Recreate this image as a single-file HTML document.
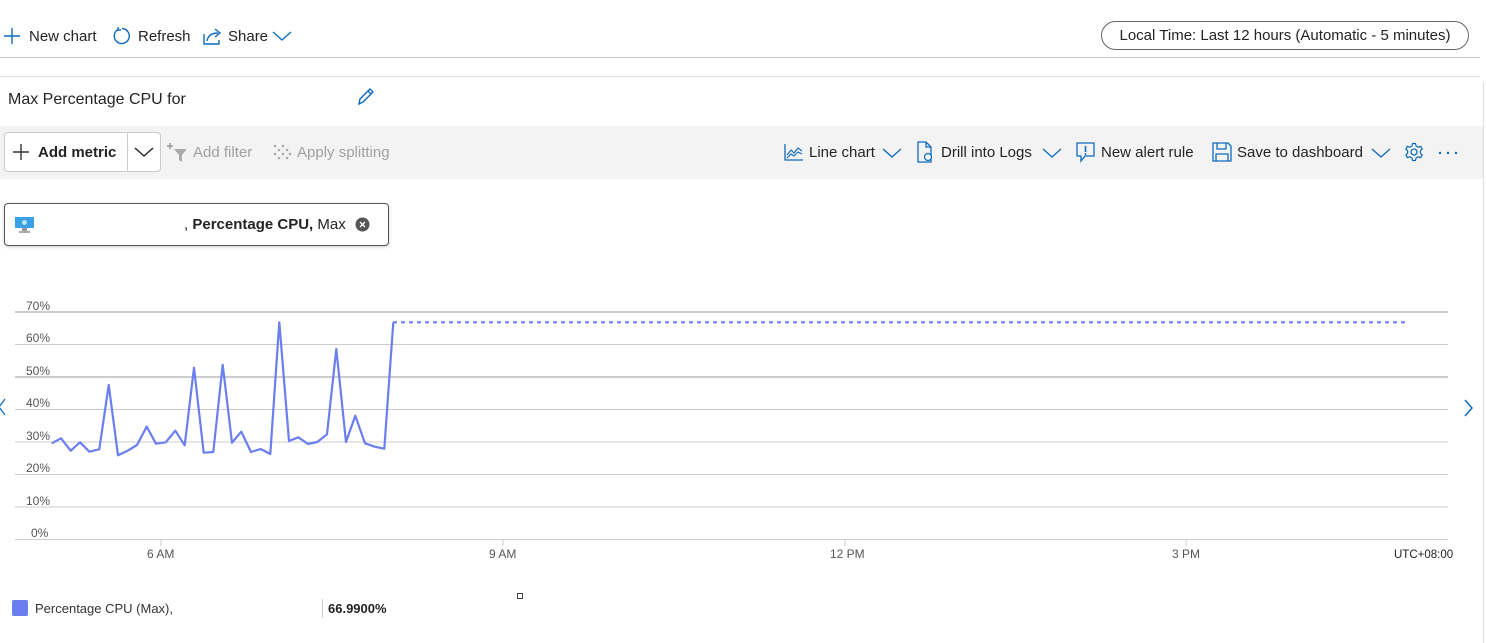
<!DOCTYPE html>
<html><head><meta charset="utf-8"><style>
*{margin:0;padding:0;box-sizing:border-box}
body{width:1486px;height:643px;background:#fff;font-family:"Liberation Sans",sans-serif;color:#242424;position:relative;overflow:hidden}
.a{position:absolute;white-space:nowrap}
</style></head><body>
<!-- top toolbar -->
<svg class="a" style="left:3px;top:27px" width="18" height="18"><path d="M9 1v16M1 9h16" stroke="#0f6cbd" stroke-width="1.4"/></svg>
<div class="a" style="left:29px;top:28px;font-size:15px">New chart</div>
<svg class="a" style="left:112px;top:26px" width="20" height="20"><path d="M6 3.5A7.5 7.5 0 1 0 10 2.5" fill="none" stroke="#0f6cbd" stroke-width="1.4"/><path d="M6 1v3h3" fill="none" stroke="#0f6cbd" stroke-width="1.4"/></svg>
<div class="a" style="left:138px;top:28px;font-size:15px">Refresh</div>
<svg class="a" style="left:202px;top:26px" width="22" height="20"><path d="M2 8v10h15v-4" fill="none" stroke="#0f6cbd" stroke-width="1.4"/><path d="M5 15c1-6 5-8 11-8M13 3l5 4-5 4" fill="none" stroke="#0f6cbd" stroke-width="1.4"/></svg>
<div class="a" style="left:228px;top:28px;font-size:15px">Share</div>
<svg class="a" style="left:272px;top:30px" width="20" height="12"><path d="M1 2l9 8 9-8" fill="none" stroke="#0f6cbd" stroke-width="1.4"/></svg>
<div class="a" style="left:1101px;top:21px;width:368px;height:29px;border:1px solid #666;border-radius:15px;font-size:15px;line-height:28px;text-align:center">Local Time: Last 12 hours (Automatic - 5 minutes)</div>
<div class="a" style="left:0;top:57px;width:1480px;height:1px;background:#ccc"></div>
<div class="a" style="left:0;top:76px;width:1480px;height:1px;background:#ddd"></div>
<div class="a" style="left:1483px;top:82px;width:1px;height:561px;background:#ddd"></div>
<!-- title -->
<div class="a" style="left:8px;top:91px;font-size:16px">Max Percentage CPU for</div>
<svg class="a" style="left:355px;top:86px" width="22" height="22"><path d="M4 18l1-5L15 3l3 3L8 16z M13 5l3 3" fill="none" stroke="#0f6cbd" stroke-width="1.4"/></svg>
<!-- gray toolbar -->
<div class="a" style="left:0;top:126px;width:1483px;height:53px;background:#f3f3f3"></div>
<div class="a" style="left:4px;top:132px;width:157px;height:40px;background:#fff;border:1px solid #ccc;border-radius:4px"></div>
<div class="a" style="left:127px;top:133px;width:1px;height:38px;background:#ccc"></div>
<svg class="a" style="left:12px;top:143px" width="18" height="18"><path d="M9 1v16M1 9h16" stroke="#333" stroke-width="1.4"/></svg>
<div class="a" style="left:38px;top:144px;font-size:15px;font-weight:bold">Add metric</div>
<svg class="a" style="left:134px;top:146px" width="20" height="12"><path d="M1 2l9 8 9-8" fill="none" stroke="#222" stroke-width="1.4"/></svg>
<svg class="a" style="left:167px;top:142px" width="22" height="22"><path d="M3 1v6M0 4h6" stroke="#999" stroke-width="1.5"/><path d="M7 7h13l-5 6v7l-3-2v-5z" fill="#aaa"/></svg>
<div class="a" style="left:193px;top:144px;font-size:15px;color:#a0a0a0">Add filter</div>
<svg class="a" style="left:272px;top:143px" width="20" height="18" fill="#aaa"><circle cx="3" cy="3" r="1.3"/><circle cx="3" cy="11" r="1.3"/><circle cx="7" cy="7" r="1.3"/><circle cx="11" cy="11" r="1.3"/><circle cx="15" cy="7" r="1.3"/><circle cx="11" cy="3" r="1.3"/><circle cx="18" cy="11" r="1.3"/><circle cx="7" cy="15" r="1.3"/><circle cx="15" cy="15" r="1.3"/></svg>
<div class="a" style="left:297px;top:144px;font-size:15px;color:#a0a0a0">Apply splitting</div>
<svg class="a" style="left:783px;top:142px" width="22" height="20"><path d="M2 2v16h18" fill="none" stroke="#0f6cbd" stroke-width="1.3"/><path d="M4 13l4-5 3 3 4-5 4 3M4 16l4-4 3 2 4-4 4 2" fill="none" stroke="#0f6cbd" stroke-width="1.1"/></svg>
<div class="a" style="left:809px;top:144px;font-size:15px">Line chart</div>
<svg class="a" style="left:882px;top:147px" width="20" height="12"><path d="M1 2l9 8 9-8" fill="none" stroke="#0f6cbd" stroke-width="1.4"/></svg>
<svg class="a" style="left:915px;top:141px" width="22" height="22"><path d="M3 1h8l5 5v15H3z M11 1v5h5" fill="none" stroke="#0f6cbd" stroke-width="1.3"/><circle cx="13" cy="16" r="3.5" fill="#fff" stroke="#0f6cbd" stroke-width="1.3"/></svg>
<div class="a" style="left:941px;top:144px;font-size:15px">Drill into Logs</div>
<svg class="a" style="left:1042px;top:147px" width="20" height="12"><path d="M1 2l9 8 9-8" fill="none" stroke="#0f6cbd" stroke-width="1.4"/></svg>
<svg class="a" style="left:1075px;top:141px" width="22" height="22"><path d="M2 2h17v13H10l-4 5v-5H2z" fill="none" stroke="#0f6cbd" stroke-width="1.3"/><path d="M10.5 5v6" stroke="#0f6cbd" stroke-width="1.6"/><circle cx="10.5" cy="13" r="1" fill="#0f6cbd"/></svg>
<div class="a" style="left:1101px;top:144px;font-size:15px">New alert rule</div>
<svg class="a" style="left:1211px;top:141px" width="22" height="22"><path d="M2 2h15l3 3v15H2z M6 2v6h9V2 M5 20v-7h12v7" fill="none" stroke="#0f6cbd" stroke-width="1.3"/></svg>
<div class="a" style="left:1237px;top:144px;font-size:15px">Save to dashboard</div>
<svg class="a" style="left:1371px;top:147px" width="20" height="12"><path d="M1 2l9 8 9-8" fill="none" stroke="#0f6cbd" stroke-width="1.4"/></svg>
<svg class="a" style="left:1404px;top:142px" width="20" height="20"><circle cx="10" cy="10" r="3" fill="none" stroke="#0f6cbd" stroke-width="1.3"/><path d="M8.5 1.5h3l.6 2.5 2.2 1.2 2.4-.8 1.5 2.6-1.8 1.8v2.4l1.8 1.8-1.5 2.6-2.4-.8-2.2 1.2-.6 2.5h-3l-.6-2.5-2.2-1.2-2.4.8-1.5-2.6 1.8-1.8V8.8L1.8 7l1.5-2.6 2.4.8 2.2-1.2z" fill="none" stroke="#0f6cbd" stroke-width="1.2"/></svg>
<svg class="a" style="left:1438px;top:151px" width="22" height="4" fill="#0f6cbd"><circle cx="2" cy="2" r="1.2"/><circle cx="10" cy="2" r="1.2"/><circle cx="18" cy="2" r="1.2"/></svg>
<!-- metric pill -->
<div class="a" style="left:4px;top:203px;width:385px;height:43px;border:1px solid #555;border-radius:4px;box-shadow:0 1px 3px rgba(0,0,0,.2)"></div>
<svg class="a" style="left:15px;top:216px" width="20" height="18"><rect x="0" y="1" width="19" height="11" fill="#3aa0e8"/><rect x="7" y="12" width="5" height="3" fill="#999"/><rect x="4" y="15" width="11" height="2" fill="#aaa"/><circle cx="9.5" cy="6.5" r="2.5" fill="#bfe6ff"/></svg>
<div class="a" style="left:184px;top:216px;font-size:15px">, <b>Percentage CPU,</b> Max</div>
<svg class="a" style="left:355px;top:217px" width="15" height="15"><circle cx="7.5" cy="7.5" r="7" fill="#555"/><path d="M5 5l5 5M10 5l-5 5" stroke="#fff" stroke-width="1.4"/></svg>
<!-- chart -->
<svg class="a" style="left:0;top:290px" width="1486" height="280" font-family="Liberation Sans" font-size="12" fill="#555">
<g stroke="#ccc" stroke-width="1">
<line x1="15" y1="22" x2="1448" y2="22" stroke-width="2"/>
<line x1="15" y1="54.5" x2="1448" y2="54.5"/>
<line x1="15" y1="87" x2="1448" y2="87" stroke-width="2"/>
<line x1="15" y1="119.5" x2="1448" y2="119.5"/>
<line x1="15" y1="152" x2="1448" y2="152"/>
<line x1="15" y1="184.5" x2="1448" y2="184.5"/>
<line x1="15" y1="217" x2="1448" y2="217"/>
<line x1="15" y1="249.5" x2="1448" y2="249.5"/>
<line x1="161" y1="249" x2="161" y2="256"/><line x1="503" y1="249" x2="503" y2="256"/><line x1="845" y1="249" x2="845" y2="256"/><line x1="1186" y1="249" x2="1186" y2="256"/>
</g>
<text x="26" y="20">70%</text><text x="26" y="52">60%</text><text x="26" y="85">50%</text><text x="26" y="117">40%</text><text x="26" y="150">30%</text><text x="26" y="182">20%</text><text x="26" y="215">10%</text><text x="31" y="247">0%</text>
<text x="147" y="268">6 AM</text><text x="489" y="268">9 AM</text><text x="830" y="268">12 PM</text><text x="1172" y="268">3 PM</text>
<text x="1394" y="268" fill="#222" font-size="11.5">UTC+08:00</text>
<path d="M5 109l-6 8 6 8" fill="none" stroke="#0f6cbd" stroke-width="1.3"/>
<path d="M1465 110l7 8-7 8" fill="none" stroke="#0f6cbd" stroke-width="1.5"/>
<polyline fill="none" stroke="#6a7ef0" stroke-width="2.2" stroke-linejoin="round" points="51.7,153.3 61,148.3 70.7,160.7 80,152.3 89.3,161.7 99.3,159.3 108.7,95 118,165.3 127.7,160.7 137,155 146.7,136.7 156,153.7 165.7,152.3 175.3,140.7 184.7,155.3 194,77.7 203.7,162.7 213.3,162 222.7,74.7 232,152.7 241.3,141.7 251,162 260.7,159 270.3,164 279.3,32.3 289,151 298.3,147.3 308,154 317.3,152 327,144.3 336.3,59 346,152 355.3,125.7 365,153.3 374.7,156.7 384.3,158.7 393.3,32.3"/>
<line x1="393" y1="32.3" x2="1408" y2="32.3" stroke="#6a7ef0" stroke-width="2.2" stroke-dasharray="4,4"/>
</svg>
<!-- legend -->
<div class="a" style="left:12px;top:600px;width:16px;height:16px;background:#6a7ef0;border-radius:2px"></div>
<div class="a" style="left:35px;top:601px;font-size:13px;color:#333">Percentage CPU (Max),</div>
<div class="a" style="left:322px;top:599px;width:1px;height:19px;background:#ccc"></div>
<div class="a" style="left:328px;top:601px;font-size:13px;font-weight:bold;color:#222">66.9900%</div>
<div class="a" style="left:517px;top:593px;width:6px;height:6px;border:1.5px solid #444"></div>
</body></html>
